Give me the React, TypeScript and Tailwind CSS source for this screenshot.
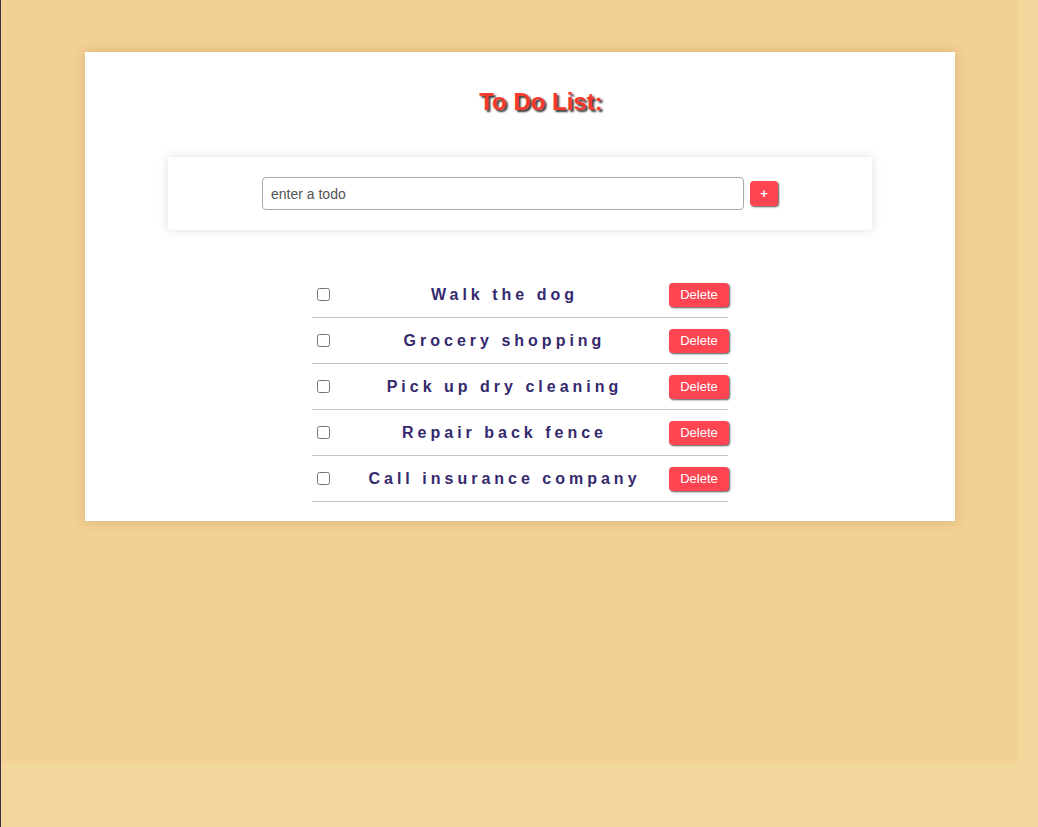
import React from "react";

const todos = [
  "Walk the dog",
  "Grocery shopping",
  "Pick up dry cleaning",
  "Repair back fence",
  "Call insurance company",
];

export default function App() {
  return (
    <div className="min-h-[827px] bg-[#f3d69b] border-l border-[#3a2f4c] font-['Liberation_Sans',Arial,sans-serif]">
      <div className="w-[1017px] h-[763px] bg-[#f3d093] pt-[52px] pl-[84px]">
        <div className="w-[870px] h-[469px] bg-white shadow-[0_0_12px_rgba(110,80,30,0.22)] pt-[34px] flex flex-col items-center">
          <h1 className="pl-[42px] text-2xl leading-8 font-bold text-[#f5392d] [text-shadow:2px_2px_2px_#333]">
            To Do List:
          </h1>

          <div className="mt-[39px] w-[704px] py-5 bg-white shadow-[0_0_10px_rgba(0,0,0,0.13)] flex items-center justify-center gap-[6px]">
            <input
              type="text"
              placeholder="enter a todo"
              className="w-[482px] h-[33px] px-2 text-sm text-[#444] placeholder:text-[#555] border border-[#aaa] rounded-[4px] outline-none"
            />
            <button className="w-[28px] h-[25px] rounded-[4px] bg-[#ff4452] text-white text-[13px] font-bold shadow-[1px_1px_2px_#555]">
              +
            </button>
          </div>

          <ul className="mt-[42px] w-[416px]">
            {todos.map((todo) => (
              <li
                key={todo}
                className="h-[46px] flex items-center border-b border-[#c4c4c4]"
              >
                <input type="checkbox" className="ml-[5px] w-[13px] h-[13px]" />
                <span className="flex-1 pl-[10px] text-center text-base font-bold tracking-[4px] text-[#35296e]">
                  {todo}
                </span>
                <button className="w-[60px] h-[24px] -mr-px rounded-[4px] bg-[#ff4452] text-white text-[13px] shadow-[1px_1px_2px_#555]">
                  Delete
                </button>
              </li>
            ))}
          </ul>
        </div>
      </div>
    </div>
  );
}
